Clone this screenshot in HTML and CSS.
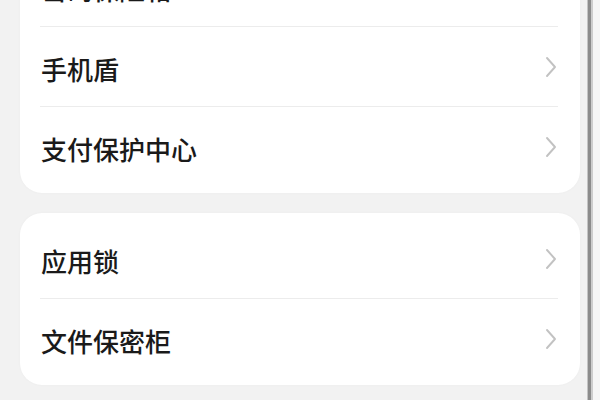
FILE: index.html
```html
<!DOCTYPE html>
<html lang="zh-CN">
<head>
<meta charset="utf-8">
<title>安全</title>
<link rel="stylesheet" href="styles.css">
</head>
<body>
<div class="screen">
  <main class="list">
    <section class="card card-first">
      <div class="row"><span class="label">密码保险箱</span><svg class="chev" viewBox="0 0 12 22" width="12" height="22"><path d="M2 2 L10 11 L2 20"/></svg></div>
      <div class="row"><span class="label">手机盾</span><svg class="chev" viewBox="0 0 12 22" width="12" height="22"><path d="M2 2 L10 11 L2 20"/></svg></div>
      <div class="row"><span class="label">支付保护中心</span><svg class="chev" viewBox="0 0 12 22" width="12" height="22"><path d="M2 2 L10 11 L2 20"/></svg></div>
    </section>
    <section class="card">
      <div class="row"><span class="label">应用锁</span><svg class="chev" viewBox="0 0 12 22" width="12" height="22"><path d="M2 2 L10 11 L2 20"/></svg></div>
      <div class="row"><span class="label">文件保密柜</span><svg class="chev" viewBox="0 0 12 22" width="12" height="22"><path d="M2 2 L10 11 L2 20"/></svg></div>
    </section>
  </main>
  <div class="scrollbar"></div>
</div>
</body>
</html>
```
FILE: styles.css
```css
html, body {
  margin: 0;
  padding: 0;
  height: 100%;
  overflow: hidden;
  background: #f2f2f2;
  font-family: "Noto Sans CJK SC", "Noto Sans", sans-serif;
}
.screen {
  display: flex;
  height: 400px;
  width: 600px;
  overflow: hidden;
}
.list {
  flex: 1;
  display: flex;
  flex-direction: column;
  gap: 20px;
  padding: 0 6px 0 20px;
}
.card {
  background: #ffffff;
  border-radius: 22px;
  padding: 6px 0;
  box-shadow: 0 0 3px rgba(0, 0, 0, 0.03);
}
.card-first {
  margin-top: -59px;
}
.row {
  box-sizing: border-box;
  height: 80px;
  margin: 0 22px 0 20px;
  padding-left: 1px;
  display: flex;
  align-items: center;
  justify-content: space-between;
  border-bottom: 1px solid #ececec;
}
.row:last-child {
  border-bottom: none;
}
.label {
  font-size: 26px;
  font-weight: 500;
  color: #1a1a1a;
  line-height: 1;
  padding-top: 4px;
}
.chev {
  margin-right: 1px;
  flex: none;
}
.chev path {
  fill: none;
  stroke: #c2c2c2;
  stroke-width: 1.9;
  stroke-linecap: round;
  stroke-linejoin: round;
}
.scrollbar {
  width: 14px;
  flex: none;
  background: linear-gradient(to right,
    #f2f2f2 0, #f2f2f2 1px,
    #c4c4c4 1px, #c4c4c4 2px,
    #8c8c8c 2px, #8c8c8c 5px,
    #cdcdcd 5px, #cdcdcd 7px,
    #f6f6f6 7px, #f6f6f6 14px);
}
```
